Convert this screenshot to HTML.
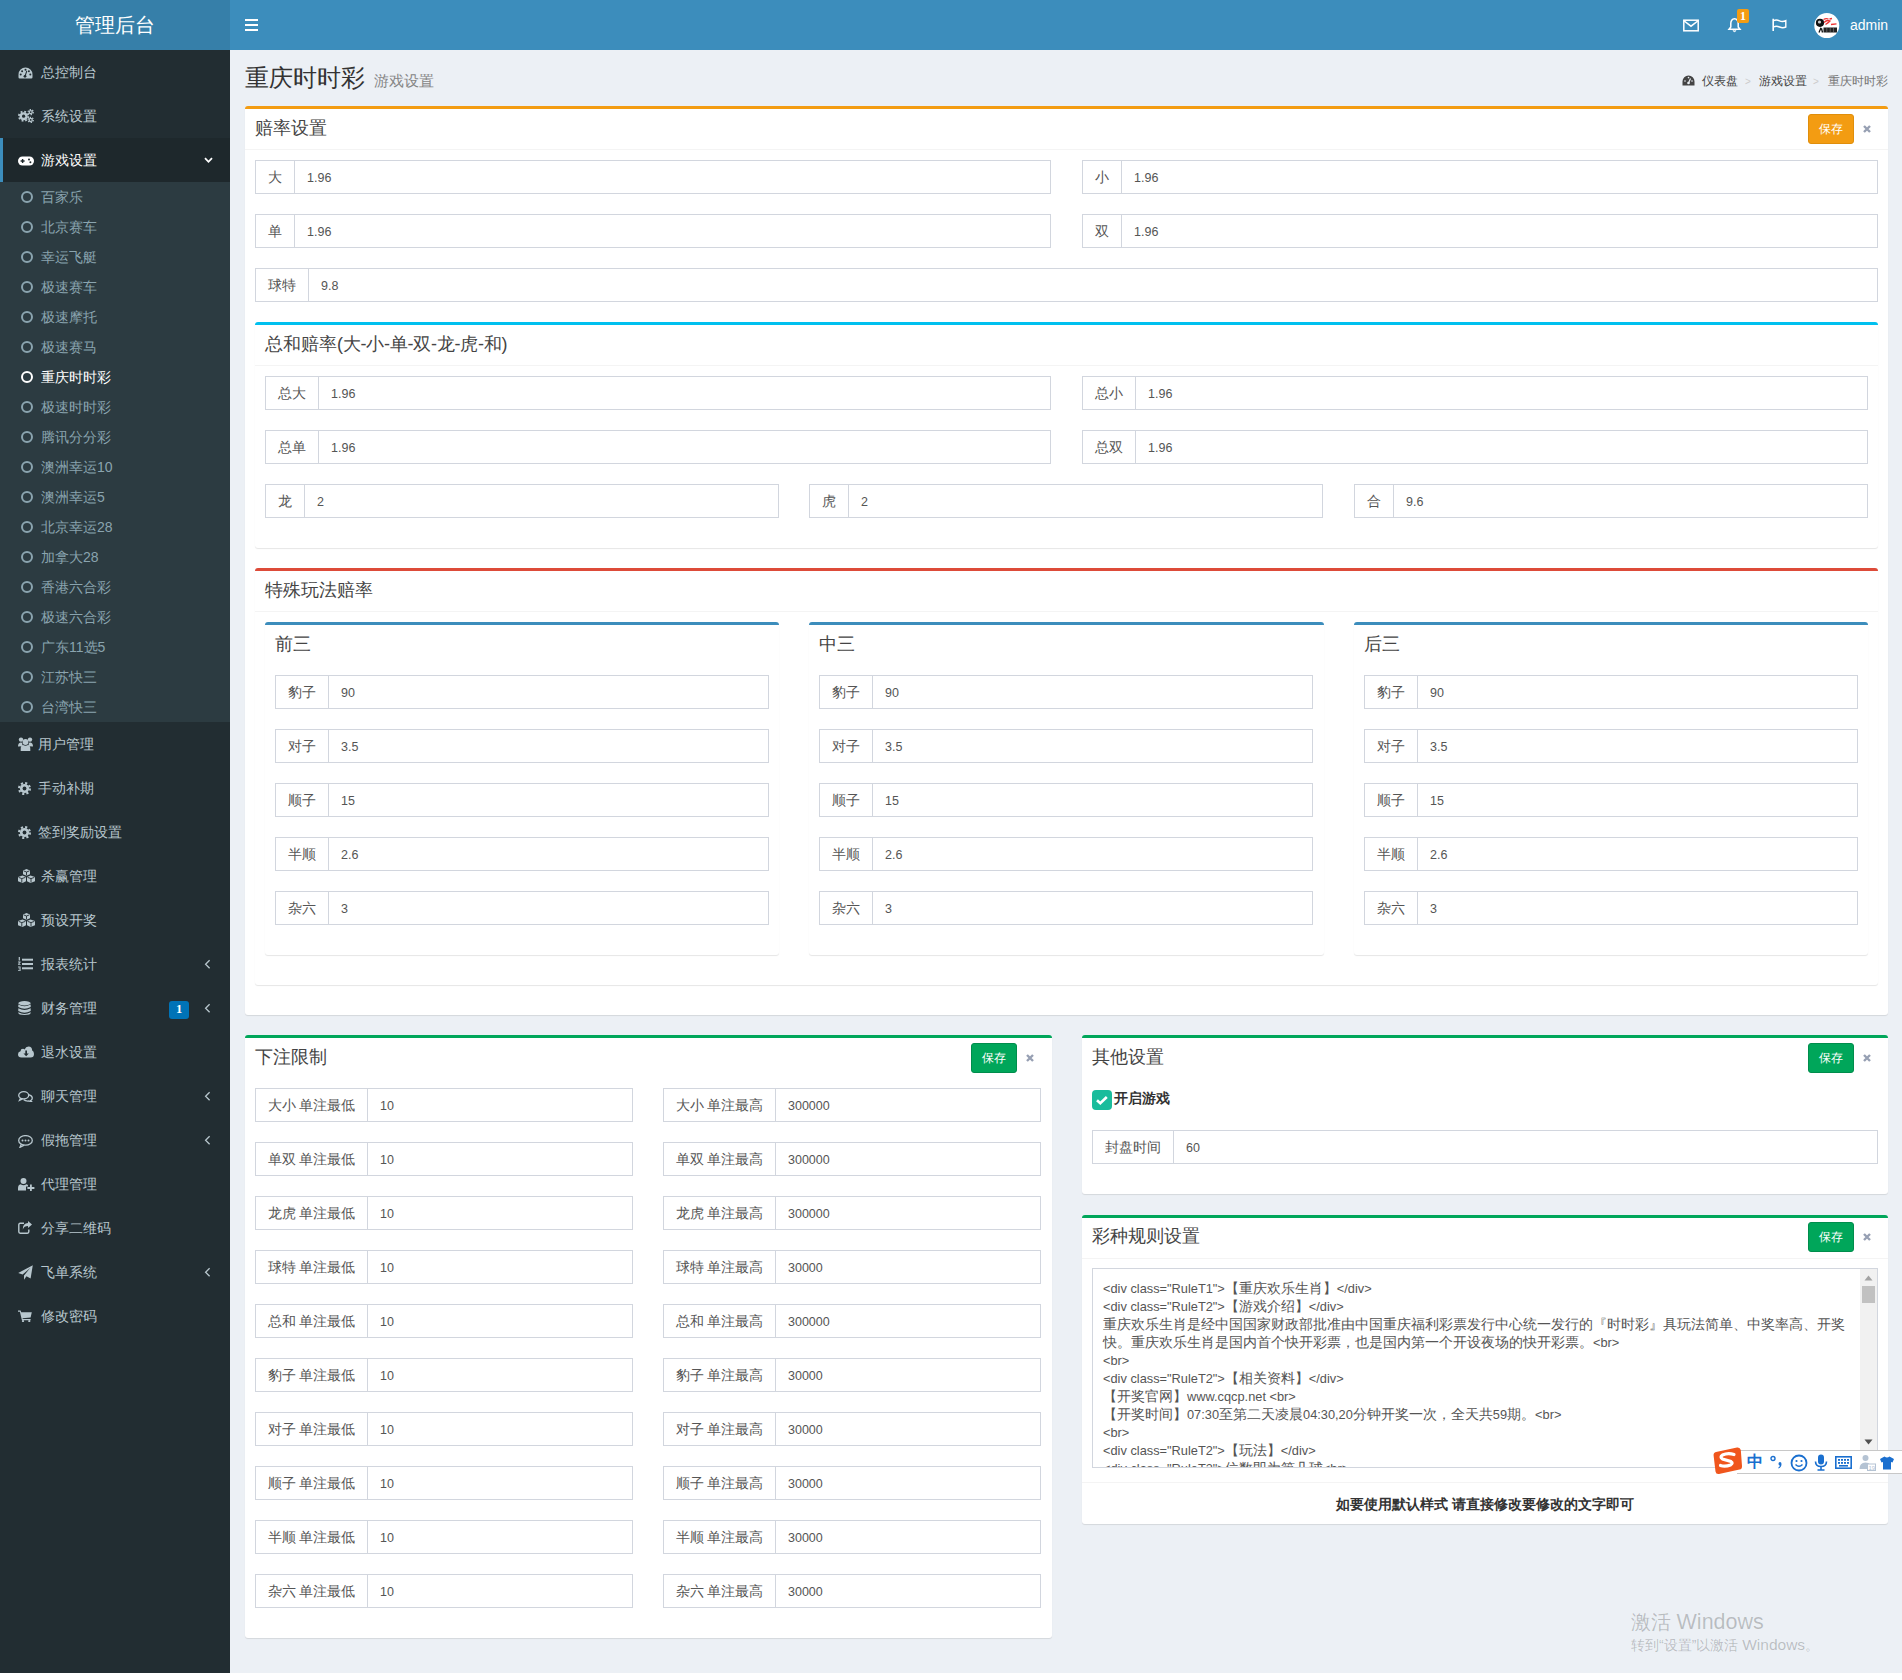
<!DOCTYPE html><html><head><meta charset="utf-8"><title>管理后台</title><style>
*{box-sizing:border-box;margin:0;padding:0}
html,body{width:1902px;height:1680px;overflow:hidden}
body{position:relative;background:#ecf0f5;font-family:"Liberation Sans",sans-serif;font-size:14px;color:#333}
.a{position:absolute}
#logo{left:0;top:0;width:230px;height:50px;background:#367fa9;color:#fff;font-size:20px;line-height:50px;text-align:center}
#nav{left:230px;top:0;width:1672px;height:50px;background:#3c8dbc}
#side{left:0;top:50px;width:230px;height:1630px;background:#222d32}
.mi{position:absolute;left:0;width:230px;height:44px;line-height:44px;color:#b8c7ce;font-size:14px}
.mi .t{position:absolute;left:41px;top:0}
.mi svg{position:absolute}
.mi.act{background:#1e282c;color:#fff;border-left:3px solid #3c8dbc}
.tv{position:absolute;left:0;width:230px;background:#2c3b41}
.si{position:absolute;left:0;width:230px;height:30px;line-height:30px;color:#8aa4af;font-size:14px}
.si .t{position:absolute;left:41px;top:0}
.si .c{position:absolute;left:21px;top:9px;width:12px;height:12px;border:2px solid #8aa4af;border-radius:50%}
.si.act{color:#fff}
.si.act .c{border-color:#fff}
.chev{position:absolute;left:204px;top:17px}
.box{position:absolute;background:#fff;border-top:3px solid #d2d6de;border-radius:3px;box-shadow:0 1px 1px rgba(0,0,0,.1)}
.bt{position:absolute;font-size:18px;color:#444;line-height:18px;white-space:nowrap}
.hb{position:absolute;left:0;right:0;height:1px;background:#f4f4f4}
.ig{position:absolute;height:34px;border:1px solid #d2d6de;background:#fff}
.ig .ad{position:absolute;left:0;top:0;height:32px;line-height:32px;border-right:1px solid #d2d6de;color:#555;font-size:14px;text-align:center}
.ig .v{position:absolute;top:1px;height:32px;line-height:32px;color:#555;font-size:12.5px}
.btn{position:absolute;width:46px;height:30px;line-height:28px;border-radius:3px;color:#fff;font-size:12px;text-align:center}
.bw{background:#f39c12;border:1px solid #e08e0b}
.bs{background:#00a65a;border:1px solid #008d4c}
.x{position:absolute}
</style></head><body>
<div id="logo" class="a">管理后台</div>
<div id="nav" class="a">
<svg class="a" style="left:15px;top:19px" width="13" height="12" viewBox="0 0 13 12"><rect x="0" y="0" width="13" height="2" fill="#fff"/><rect x="0" y="5" width="13" height="2" fill="#fff"/><rect x="0" y="10" width="13" height="2" fill="#fff"/></svg>
<svg class="a" style="left:1453px;top:19px" width="16" height="13" viewBox="0 0 16 13"><rect x="0.8" y="1.2" width="14.4" height="10.6" fill="none" stroke="#fff" stroke-width="1.5"/><path d="M1.2 2 L8 7.2 L14.8 2" fill="none" stroke="#fff" stroke-width="1.5"/></svg>
<svg class="a" style="left:1497px;top:17px" width="15" height="16" viewBox="0 0 15 16"><path d="M7.5 1.8 C5 1.8 3.8 4 3.8 6.5 L3.8 10 L2 12.3 L13 12.3 L11.2 10 L11.2 6.5 C11.2 4 10 1.8 7.5 1.8 Z" fill="none" stroke="#fff" stroke-width="1.5"/><path d="M5.8 13.5 Q7.5 15.8 9.2 13.5" fill="#fff" stroke="#fff" stroke-width="1"/></svg>
<div class="a" style="left:1507px;top:9px;width:12px;height:14px;background:#f39c12;border-radius:2px;color:#fff;font-size:12px;font-weight:bold;line-height:14px;text-align:center;font-family:'Liberation Serif',serif">1</div>
<svg class="a" style="left:1541px;top:18px" width="16" height="14" viewBox="0 0 16 14"><path d="M2.2 0.8 L2.2 13" stroke="#fff" stroke-width="1.6"/><path d="M2.5 2.6 Q5.5 1.4 8.5 2.8 T14.8 2.6 L14.8 9 Q11.8 10.4 8.5 9 T2.5 9" fill="none" stroke="#fff" stroke-width="1.4"/></svg>
<svg class="a" style="left:1584px;top:13px" width="26" height="26" viewBox="0 0 26 26"><circle cx="12.8" cy="12.6" r="12.5" fill="#fff"/><circle cx="6" cy="9.8" r="4.1" fill="#111"/><circle cx="5.5" cy="9" r="1.6" fill="#ccc"/><path d="M9.5 6.5 Q12 5 14.5 6 M10 9.5 Q13 6.5 16 8 Q14 10 11.5 11.5 M15.5 6 L18 5.5 M17 11.5 L22.5 10.8" fill="none" stroke="#e33" stroke-width="1.3"/><path d="M5 19.5 L7 14.8 M7.5 15.5 L8.5 19.5" stroke="#111" stroke-width="1.3"/><rect x="9.5" y="14.5" width="13.5" height="5" fill="#222"/><path d="M12.8 15 V19 M16.2 15 V19 M19.5 15 V19" stroke="#777" stroke-width="0.7"/></svg>
<div class="a" style="left:1620px;top:0;line-height:50px;color:#fff;font-size:14px">admin</div>
</div>
<div id="side" class="a">
<div class="mi" style="top:0px"><svg class="a" style="left:18px;top:17px" width="15" height="12" viewBox="0 0 15 12"><path d="M7.5 0.5 A7 7 0 0 0 0.5 7.5 L0.5 10.3 Q0.5 11.5 1.7 11.5 L13.3 11.5 Q14.5 11.5 14.5 10.3 L14.5 7.5 A7 7 0 0 0 7.5 0.5Z" fill="#b8c7ce"/><g fill="#222d32"><circle cx="2.7" cy="7.6" r="1"/><circle cx="4.1" cy="4.2" r="1"/><circle cx="7.5" cy="2.7" r="1"/><circle cx="10.9" cy="4.2" r="1"/><circle cx="12.3" cy="7.6" r="1"/><circle cx="7" cy="9.3" r="1.4"/></g><path d="M7 9.3 L8.8 3.8" stroke="#222d32" stroke-width="1.1"/></svg><span class="t" style="left:41px">总控制台</span></div>
<div class="mi" style="top:44px"><svg class="a" style="left:18px;top:15px" width="16" height="14" viewBox="0 0 16 14"><g fill="#b8c7ce"><circle cx="5.6" cy="7.2" r="4"/><circle cx="12.7" cy="3.1" r="2.2"/><circle cx="12.7" cy="10.9" r="2.2"/></g><g fill="none" stroke="#b8c7ce"><circle cx="5.6" cy="7.2" r="4.7" stroke-width="1.8" stroke-dasharray="1.85 1.85"/><circle cx="12.7" cy="3.1" r="2.6" stroke-width="1.2" stroke-dasharray="1.36 1.36"/><circle cx="12.7" cy="10.9" r="2.6" stroke-width="1.2" stroke-dasharray="1.36 1.36"/></g><g fill="#222d32"><circle cx="5.6" cy="7.2" r="1.6"/><circle cx="12.7" cy="3.1" r="0.9"/><circle cx="12.7" cy="10.9" r="0.9"/></g></svg><span class="t" style="left:41px">系统设置</span></div>
<div class="mi act" style="top:88px"><svg class="a" style="left:15px;top:18px" width="16" height="10" viewBox="0 0 16 10"><path d="M4.5 0.5 L11.5 0.5 A4.5 4.5 0 0 1 11.5 9.5 L4.5 9.5 A4.5 4.5 0 0 1 4.5 0.5Z" fill="#fff"/><path d="M3.9 3h1.4v1.3h1.3v1.4H5.3V7H3.9V5.7H2.6V4.3h1.3z" fill="#1e282c"/><circle cx="11" cy="3.6" r="1" fill="#1e282c"/><circle cx="12.4" cy="6.2" r="1" fill="#1e282c"/></svg><span class="t" style="left:38px">游戏设置</span><svg class="a" style="left:201px;top:19px" width="9" height="7" viewBox="0 0 9 7"><path d="M1 1.2 L4.5 4.8 L8 1.2" fill="none" stroke="#fff" stroke-width="1.8"/></svg></div>
<div class="tv" style="top:132px;height:540px">
<div class="si" style="top:0px"><span class="c"></span><span class="t">百家乐</span></div>
<div class="si" style="top:30px"><span class="c"></span><span class="t">北京赛车</span></div>
<div class="si" style="top:60px"><span class="c"></span><span class="t">幸运飞艇</span></div>
<div class="si" style="top:90px"><span class="c"></span><span class="t">极速赛车</span></div>
<div class="si" style="top:120px"><span class="c"></span><span class="t">极速摩托</span></div>
<div class="si" style="top:150px"><span class="c"></span><span class="t">极速赛马</span></div>
<div class="si act" style="top:180px"><span class="c"></span><span class="t">重庆时时彩</span></div>
<div class="si" style="top:210px"><span class="c"></span><span class="t">极速时时彩</span></div>
<div class="si" style="top:240px"><span class="c"></span><span class="t">腾讯分分彩</span></div>
<div class="si" style="top:270px"><span class="c"></span><span class="t">澳洲幸运10</span></div>
<div class="si" style="top:300px"><span class="c"></span><span class="t">澳洲幸运5</span></div>
<div class="si" style="top:330px"><span class="c"></span><span class="t">北京幸运28</span></div>
<div class="si" style="top:360px"><span class="c"></span><span class="t">加拿大28</span></div>
<div class="si" style="top:390px"><span class="c"></span><span class="t">香港六合彩</span></div>
<div class="si" style="top:420px"><span class="c"></span><span class="t">极速六合彩</span></div>
<div class="si" style="top:450px"><span class="c"></span><span class="t">广东11选5</span></div>
<div class="si" style="top:480px"><span class="c"></span><span class="t">江苏快三</span></div>
<div class="si" style="top:510px"><span class="c"></span><span class="t">台湾快三</span></div>
</div>
<div class="mi" style="top:672px"><svg class="a" style="left:18px;top:15px" width="15" height="14" viewBox="0 0 15 14"><g fill="#b8c7ce"><circle cx="3" cy="2.6" r="2.2"/><circle cx="12" cy="2.6" r="2.2"/><circle cx="7.5" cy="5" r="2.9"/><path d="M0 9.5 Q0 6 2.5 5.5 L4.2 5.8 Q4 8 5 9.3 L0 9.5Z"/><path d="M15 9.5 Q15 6 12.5 5.5 L10.8 5.8 Q11 8 10 9.3 L15 9.5Z"/><path d="M2.7 14 L2.7 11.8 Q2.7 8.4 5 8 Q7.5 9.3 10 8 Q12.3 8.4 12.3 11.8 L12.3 14Z"/></g></svg><span class="t" style="left:38px">用户管理</span>
</div>
<div class="mi" style="top:716px"><svg class="a" style="left:18px;top:16px" width="13" height="13" viewBox="0 0 13 13"><circle cx="6.5" cy="6.5" r="4.6" fill="#b8c7ce"/><circle cx="6.5" cy="6.5" r="5.4" fill="none" stroke="#b8c7ce" stroke-width="2.2" stroke-dasharray="2.12 2.12"/><circle cx="6.5" cy="6.5" r="1.9" fill="#222d32"/></svg><span class="t" style="left:38px">手动补期</span>
</div>
<div class="mi" style="top:760px"><svg class="a" style="left:18px;top:16px" width="13" height="13" viewBox="0 0 13 13"><circle cx="6.5" cy="6.5" r="4.6" fill="#b8c7ce"/><circle cx="6.5" cy="6.5" r="5.4" fill="none" stroke="#b8c7ce" stroke-width="2.2" stroke-dasharray="2.12 2.12"/><circle cx="6.5" cy="6.5" r="1.9" fill="#222d32"/></svg><span class="t" style="left:38px">签到奖励设置</span>
</div>
<div class="mi" style="top:804px"><svg class="a" style="left:18px;top:15px" width="17" height="14" viewBox="0 0 17 14"><g fill="#b8c7ce"><path d="M8.5 0 L12 1.5 L12 5.3 L8.5 6.8 L5 5.3 L5 1.5Z"/><path d="M4.5 6.5 L8 8 L8 12.2 L4.5 14 L0 12.2 L0 8Z"/><path d="M12.5 6.5 L17 8 L17 12.2 L12.5 14 L9 12.2 L9 8Z"/></g><g fill="none" stroke="#222d32" stroke-width="0.9"><path d="M5.6 1.9 L8.5 3 L11.4 1.9 M8.5 3 L8.5 6.3"/><path d="M0.6 8.4 L3.8 9.6 L7.4 8.4 M3.8 9.6 L3.8 13.6"/><path d="M9.6 8.4 L13 9.6 L16.4 8.4 M13 9.6 L13 13.6"/></g></svg><span class="t" style="left:41px">杀赢管理</span>
</div>
<div class="mi" style="top:848px"><svg class="a" style="left:18px;top:15px" width="17" height="14" viewBox="0 0 17 14"><g fill="#b8c7ce"><path d="M8.5 0 L12 1.5 L12 5.3 L8.5 6.8 L5 5.3 L5 1.5Z"/><path d="M4.5 6.5 L8 8 L8 12.2 L4.5 14 L0 12.2 L0 8Z"/><path d="M12.5 6.5 L17 8 L17 12.2 L12.5 14 L9 12.2 L9 8Z"/></g><g fill="none" stroke="#222d32" stroke-width="0.9"><path d="M5.6 1.9 L8.5 3 L11.4 1.9 M8.5 3 L8.5 6.3"/><path d="M0.6 8.4 L3.8 9.6 L7.4 8.4 M3.8 9.6 L3.8 13.6"/><path d="M9.6 8.4 L13 9.6 L16.4 8.4 M13 9.6 L13 13.6"/></g></svg><span class="t" style="left:41px">预设开奖</span>
</div>
<div class="mi" style="top:892px"><svg class="a" style="left:18px;top:15px" width="15" height="14" viewBox="0 0 15 14"><g fill="#b8c7ce"><rect x="4" y="1.7" width="11" height="2"/><rect x="4" y="6" width="11" height="2"/><rect x="4" y="10.3" width="11" height="2"/><path d="M0.7 0 H1.9 V3.6 H0.7Z M0 4.6 H2.6 V5.4 L1.2 7 H2.6 V7.8 H0 V7.1 L1.5 5.4 H0Z M0 9.6 H2.6 V14 H0 V13.2 H1.7 V12.2 H0.6 V11.4 H1.7 V10.4 H0Z"/></g></svg><span class="t" style="left:41px">报表统计</span>
<svg class="chev" width="7" height="10" viewBox="0 0 7 10"><path d="M5.6 1.3 L1.6 5.3 L5.6 9.3" fill="none" stroke="#b8c7ce" stroke-width="1.3"/></svg>
</div>
<div class="mi" style="top:936px"><svg class="a" style="left:18px;top:15px" width="13" height="14" viewBox="0 0 13 14"><g fill="#b8c7ce"><ellipse cx="6.5" cy="2.2" rx="6.2" ry="2.2"/><path d="M0.3 3.4 Q6.5 7 12.7 3.4 L12.7 6 Q6.5 9.6 0.3 6Z"/><path d="M0.3 7.3 Q6.5 10.9 12.7 7.3 L12.7 9.9 Q6.5 13.5 0.3 9.9Z"/><path d="M0.3 11.2 Q6.5 14.8 12.7 11.2 L12.7 11.8 Q12.7 14 6.5 14 Q0.3 14 0.3 11.8Z"/></g></svg><span class="t" style="left:41px">财务管理</span>
<svg class="chev" width="7" height="10" viewBox="0 0 7 10"><path d="M5.6 1.3 L1.6 5.3 L5.6 9.3" fill="none" stroke="#b8c7ce" stroke-width="1.3"/></svg>
<div class="a" style="left:169px;top:15px;width:20px;height:18px;background:#0073b7;border-radius:3px;color:#fff;font-size:12.5px;font-weight:bold;line-height:16px;text-align:center;font-family:'Liberation Serif',serif">1</div>
</div>
<div class="mi" style="top:980px"><svg class="a" style="left:18px;top:16px" width="16" height="12" viewBox="0 0 16 12"><path d="M3.5 11.5 Q0 11.5 0 8.3 Q0 5.8 2.5 5.2 Q2.6 2.8 5 2.8 Q6 2.8 6.6 3.4 Q7.8 0.5 10.5 0.5 Q14 0.5 14.2 4.6 Q16 5.6 16 8 Q16 11.5 12.5 11.5Z" fill="#b8c7ce"/><path d="M7.3 4.5h1.7v3h1.8L8.15 10.2 5.5 7.5h1.8z" fill="#222d32"/></svg><span class="t" style="left:41px">退水设置</span>
</div>
<div class="mi" style="top:1024px"><svg class="a" style="left:18px;top:17px" width="15" height="11" viewBox="0 0 15 11"><g fill="none" stroke="#b8c7ce" stroke-width="1.3"><ellipse cx="5.7" cy="4.3" rx="5" ry="3.6"/><path d="M2.6 7 L1.5 9.3 L4.6 7.8"/><path d="M10.6 3.6 Q14.3 4.6 14.3 7 Q14.3 8.6 12.8 9.5 L13.6 10.6 L10.8 10 Q7.3 10.3 5.6 8.5"/></g></svg><span class="t" style="left:41px">聊天管理</span>
<svg class="chev" width="7" height="10" viewBox="0 0 7 10"><path d="M5.6 1.3 L1.6 5.3 L5.6 9.3" fill="none" stroke="#b8c7ce" stroke-width="1.3"/></svg>
</div>
<div class="mi" style="top:1068px"><svg class="a" style="left:18px;top:17px" width="15" height="13" viewBox="0 0 15 13"><g fill="none" stroke="#b8c7ce" stroke-width="1.3"><ellipse cx="7.5" cy="5.4" rx="6.8" ry="4.8"/><path d="M3.4 9 L2 12.3 L6.2 10.1"/></g><g fill="#b8c7ce"><circle cx="4.5" cy="5.4" r="1"/><circle cx="7.5" cy="5.4" r="1"/><circle cx="10.5" cy="5.4" r="1"/></g></svg><span class="t" style="left:41px">假拖管理</span>
<svg class="chev" width="7" height="10" viewBox="0 0 7 10"><path d="M5.6 1.3 L1.6 5.3 L5.6 9.3" fill="none" stroke="#b8c7ce" stroke-width="1.3"/></svg>
</div>
<div class="mi" style="top:1112px"><svg class="a" style="left:18px;top:16px" width="17" height="13" viewBox="0 0 17 13"><g fill="#b8c7ce"><circle cx="5.5" cy="3" r="3"/><path d="M0 12.5 L0 10.5 Q0 6.8 2.6 6.3 Q5.5 8 8.4 6.3 Q9.4 6.5 10 7.2 L10 8.5 L8 8.5 L8 12.5Z"/><path d="M12 6.5h1.8v2.6h2.6v1.8h-2.6v2.6H12v-2.6H9.4V9.1H12z"/></g></svg><span class="t" style="left:41px">代理管理</span>
</div>
<div class="mi" style="top:1156px"><svg class="a" style="left:18px;top:15px" width="14" height="13" viewBox="0 0 14 13"><g fill="none" stroke="#b8c7ce" stroke-width="1.4"><path d="M6 2.3 H2.2 Q0.8 2.3 0.8 3.7 L0.8 10.8 Q0.8 12.2 2.2 12.2 L9.4 12.2 Q10.8 12.2 10.8 10.8 L10.8 8.5"/></g><path d="M10 0 L14 3.5 L10 7 L10 5 Q6 5 4.8 8.4 Q4.8 2.2 10 2.1Z" fill="#b8c7ce"/></svg><span class="t" style="left:41px">分享二维码</span>
</div>
<div class="mi" style="top:1200px"><svg class="a" style="left:18px;top:15px" width="15" height="15" viewBox="0 0 15 15"><path d="M14.8 0.2 L0.2 8 L4.6 9.6 L12.4 2.8 L6 10.4 L6 14.8 L8.5 11.3 L12.6 13.4Z" fill="#b8c7ce"/></svg><span class="t" style="left:41px">飞单系统</span>
<svg class="chev" width="7" height="10" viewBox="0 0 7 10"><path d="M5.6 1.3 L1.6 5.3 L5.6 9.3" fill="none" stroke="#b8c7ce" stroke-width="1.3"/></svg>
</div>
<div class="mi" style="top:1244px"><svg class="a" style="left:18px;top:16px" width="14" height="12" viewBox="0 0 14 12"><g fill="#b8c7ce"><path d="M0 0.6 H2.6 L3.2 2.3 H13.8 L12.6 7.6 L4.5 8.3 L4.8 9.1 H12.6 V10.2 H3.9 L1.9 1.7 H0Z"/><circle cx="5" cy="11" r="1.1"/><circle cx="11.3" cy="11" r="1.1"/></g></svg><span class="t" style="left:41px">修改密码</span>
</div>
</div>
<div class="a" style="left:245px;top:65px;font-size:24px;line-height:26px;color:#333;white-space:nowrap">重庆时时彩 <span style="font-size:15px;color:#858585;padding-left:2px">游戏设置</span></div>
<div class="a" style="left:1682px;top:74px;font-size:12px;line-height:14px;color:#444;white-space:nowrap">
<svg class="a" style="left:0;top:1px" width="13" height="11" viewBox="0 0 13 11"><path d="M6.5 0.5 A6 6 0 0 0 0.5 6.5 L0.5 10.5 L12.5 10.5 L12.5 6.5 A6 6 0 0 0 6.5 0.5 Z" fill="#444"/><circle cx="6.5" cy="8" r="1.3" fill="#ecf0f5"/><path d="M6.5 8 L8.5 3.5" stroke="#ecf0f5" stroke-width="1.2"/><circle cx="3" cy="6" r=".8" fill="#ecf0f5"/><circle cx="10" cy="6" r=".8" fill="#ecf0f5"/><circle cx="6.5" cy="2.6" r=".8" fill="#ecf0f5"/></svg>
<span class="a" style="left:20px;top:0">仪表盘</span><span class="a" style="left:63px;top:1px;font-size:10px;color:#ccc">&gt;</span><span class="a" style="left:77px;top:0">游戏设置</span><span class="a" style="left:131px;top:1px;font-size:10px;color:#ccc">&gt;</span><span class="a" style="left:146px;top:0;color:#777">重庆时时彩</span>
</div>
<div class="box" style="left:245px;top:106px;width:1643px;height:909px;border-top-color:#f39c12;"></div>
<div class="bt" style="left:255px;top:119px">赔率设置</div>
<div class="a" style="left:245px;top:149px;width:1643px;height:1px;background:#f4f4f4"></div>
<div class="btn bw" style="left:1808px;top:114px">保存</div>
<svg class="x" style="left:1863px;top:125px" width="8" height="8" viewBox="0 0 8 8"><path d="M1 1 L7 7 M7 1 L1 7" stroke="#97a0b3" stroke-width="2.4"/></svg>
<div class="ig" style="left:255px;top:160px;width:796px"><div class="ad" style="width:39px">大</div><div class="v" style="left:51px">1.96</div></div>
<div class="ig" style="left:1082px;top:160px;width:796px"><div class="ad" style="width:39px">小</div><div class="v" style="left:51px">1.96</div></div>
<div class="ig" style="left:255px;top:214px;width:796px"><div class="ad" style="width:39px">单</div><div class="v" style="left:51px">1.96</div></div>
<div class="ig" style="left:1082px;top:214px;width:796px"><div class="ad" style="width:39px">双</div><div class="v" style="left:51px">1.96</div></div>
<div class="ig" style="left:255px;top:268px;width:1623px"><div class="ad" style="width:53px">球特</div><div class="v" style="left:65px">9.8</div></div>
<div class="box" style="left:255px;top:322px;width:1623px;height:226px;border-top-color:#00c0ef;"></div>
<div class="bt" style="left:265px;top:335px">总和赔率<span style="letter-spacing:-0.5px">(</span>大<span style="letter-spacing:-0.5px">-</span>小<span style="letter-spacing:-0.5px">-</span>单<span style="letter-spacing:-0.5px">-</span>双<span style="letter-spacing:-0.5px">-</span>龙<span style="letter-spacing:-0.5px">-</span>虎<span style="letter-spacing:-0.5px">-</span>和)</div>
<div class="a" style="left:255px;top:365px;width:1623px;height:1px;background:#f4f4f4"></div>
<div class="ig" style="left:265px;top:376px;width:786px"><div class="ad" style="width:53px">总大</div><div class="v" style="left:65px">1.96</div></div>
<div class="ig" style="left:1082px;top:376px;width:786px"><div class="ad" style="width:53px">总小</div><div class="v" style="left:65px">1.96</div></div>
<div class="ig" style="left:265px;top:430px;width:786px"><div class="ad" style="width:53px">总单</div><div class="v" style="left:65px">1.96</div></div>
<div class="ig" style="left:1082px;top:430px;width:786px"><div class="ad" style="width:53px">总双</div><div class="v" style="left:65px">1.96</div></div>
<div class="ig" style="left:265px;top:484px;width:514px"><div class="ad" style="width:39px">龙</div><div class="v" style="left:51px">2</div></div>
<div class="ig" style="left:809px;top:484px;width:514px"><div class="ad" style="width:39px">虎</div><div class="v" style="left:51px">2</div></div>
<div class="ig" style="left:1354px;top:484px;width:514px"><div class="ad" style="width:39px">合</div><div class="v" style="left:51px">9.6</div></div>
<div class="box" style="left:255px;top:568px;width:1623px;height:417px;border-top-color:#dd4b39;"></div>
<div class="bt" style="left:265px;top:581px">特殊玩法赔率</div>
<div class="a" style="left:255px;top:611px;width:1623px;height:1px;background:#f4f4f4"></div>
<div class="box" style="left:265px;top:622px;width:514px;height:333px;border-top-color:#3c8dbc;"></div>
<div class="bt" style="left:275px;top:635px">前三</div>
<div class="ig" style="left:275px;top:675px;width:494px"><div class="ad" style="width:53px">豹子</div><div class="v" style="left:65px">90</div></div>
<div class="ig" style="left:275px;top:729px;width:494px"><div class="ad" style="width:53px">对子</div><div class="v" style="left:65px">3.5</div></div>
<div class="ig" style="left:275px;top:783px;width:494px"><div class="ad" style="width:53px">顺子</div><div class="v" style="left:65px">15</div></div>
<div class="ig" style="left:275px;top:837px;width:494px"><div class="ad" style="width:53px">半顺</div><div class="v" style="left:65px">2.6</div></div>
<div class="ig" style="left:275px;top:891px;width:494px"><div class="ad" style="width:53px">杂六</div><div class="v" style="left:65px">3</div></div>
<div class="box" style="left:809px;top:622px;width:515px;height:333px;border-top-color:#3c8dbc;"></div>
<div class="bt" style="left:819px;top:635px">中三</div>
<div class="ig" style="left:819px;top:675px;width:494px"><div class="ad" style="width:53px">豹子</div><div class="v" style="left:65px">90</div></div>
<div class="ig" style="left:819px;top:729px;width:494px"><div class="ad" style="width:53px">对子</div><div class="v" style="left:65px">3.5</div></div>
<div class="ig" style="left:819px;top:783px;width:494px"><div class="ad" style="width:53px">顺子</div><div class="v" style="left:65px">15</div></div>
<div class="ig" style="left:819px;top:837px;width:494px"><div class="ad" style="width:53px">半顺</div><div class="v" style="left:65px">2.6</div></div>
<div class="ig" style="left:819px;top:891px;width:494px"><div class="ad" style="width:53px">杂六</div><div class="v" style="left:65px">3</div></div>
<div class="box" style="left:1354px;top:622px;width:514px;height:333px;border-top-color:#3c8dbc;"></div>
<div class="bt" style="left:1364px;top:635px">后三</div>
<div class="ig" style="left:1364px;top:675px;width:494px"><div class="ad" style="width:53px">豹子</div><div class="v" style="left:65px">90</div></div>
<div class="ig" style="left:1364px;top:729px;width:494px"><div class="ad" style="width:53px">对子</div><div class="v" style="left:65px">3.5</div></div>
<div class="ig" style="left:1364px;top:783px;width:494px"><div class="ad" style="width:53px">顺子</div><div class="v" style="left:65px">15</div></div>
<div class="ig" style="left:1364px;top:837px;width:494px"><div class="ad" style="width:53px">半顺</div><div class="v" style="left:65px">2.6</div></div>
<div class="ig" style="left:1364px;top:891px;width:494px"><div class="ad" style="width:53px">杂六</div><div class="v" style="left:65px">3</div></div>
<div class="box" style="left:245px;top:1035px;width:807px;height:603px;border-top-color:#00a65a;"></div>
<div class="bt" style="left:255px;top:1048px">下注限制</div>
<div class="btn bs" style="left:971px;top:1043px">保存</div>
<svg class="x" style="left:1026px;top:1054px" width="8" height="8" viewBox="0 0 8 8"><path d="M1 1 L7 7 M7 1 L1 7" stroke="#97a0b3" stroke-width="2.4"/></svg>
<div class="ig" style="left:255px;top:1088px;width:378px"><div class="ad" style="width:112px">大小 单注最低</div><div class="v" style="left:124px">10</div></div>
<div class="ig" style="left:663px;top:1088px;width:378px"><div class="ad" style="width:112px">大小 单注最高</div><div class="v" style="left:124px">300000</div></div>
<div class="ig" style="left:255px;top:1142px;width:378px"><div class="ad" style="width:112px">单双 单注最低</div><div class="v" style="left:124px">10</div></div>
<div class="ig" style="left:663px;top:1142px;width:378px"><div class="ad" style="width:112px">单双 单注最高</div><div class="v" style="left:124px">300000</div></div>
<div class="ig" style="left:255px;top:1196px;width:378px"><div class="ad" style="width:112px">龙虎 单注最低</div><div class="v" style="left:124px">10</div></div>
<div class="ig" style="left:663px;top:1196px;width:378px"><div class="ad" style="width:112px">龙虎 单注最高</div><div class="v" style="left:124px">300000</div></div>
<div class="ig" style="left:255px;top:1250px;width:378px"><div class="ad" style="width:112px">球特 单注最低</div><div class="v" style="left:124px">10</div></div>
<div class="ig" style="left:663px;top:1250px;width:378px"><div class="ad" style="width:112px">球特 单注最高</div><div class="v" style="left:124px">30000</div></div>
<div class="ig" style="left:255px;top:1304px;width:378px"><div class="ad" style="width:112px">总和 单注最低</div><div class="v" style="left:124px">10</div></div>
<div class="ig" style="left:663px;top:1304px;width:378px"><div class="ad" style="width:112px">总和 单注最高</div><div class="v" style="left:124px">300000</div></div>
<div class="ig" style="left:255px;top:1358px;width:378px"><div class="ad" style="width:112px">豹子 单注最低</div><div class="v" style="left:124px">10</div></div>
<div class="ig" style="left:663px;top:1358px;width:378px"><div class="ad" style="width:112px">豹子 单注最高</div><div class="v" style="left:124px">30000</div></div>
<div class="ig" style="left:255px;top:1412px;width:378px"><div class="ad" style="width:112px">对子 单注最低</div><div class="v" style="left:124px">10</div></div>
<div class="ig" style="left:663px;top:1412px;width:378px"><div class="ad" style="width:112px">对子 单注最高</div><div class="v" style="left:124px">30000</div></div>
<div class="ig" style="left:255px;top:1466px;width:378px"><div class="ad" style="width:112px">顺子 单注最低</div><div class="v" style="left:124px">10</div></div>
<div class="ig" style="left:663px;top:1466px;width:378px"><div class="ad" style="width:112px">顺子 单注最高</div><div class="v" style="left:124px">30000</div></div>
<div class="ig" style="left:255px;top:1520px;width:378px"><div class="ad" style="width:112px">半顺 单注最低</div><div class="v" style="left:124px">10</div></div>
<div class="ig" style="left:663px;top:1520px;width:378px"><div class="ad" style="width:112px">半顺 单注最高</div><div class="v" style="left:124px">30000</div></div>
<div class="ig" style="left:255px;top:1574px;width:378px"><div class="ad" style="width:112px">杂六 单注最低</div><div class="v" style="left:124px">10</div></div>
<div class="ig" style="left:663px;top:1574px;width:378px"><div class="ad" style="width:112px">杂六 单注最高</div><div class="v" style="left:124px">30000</div></div>
<div class="box" style="left:1082px;top:1035px;width:806px;height:159px;border-top-color:#00a65a;"></div>
<div class="bt" style="left:1092px;top:1048px">其他设置</div>
<div class="btn bs" style="left:1808px;top:1043px">保存</div>
<svg class="x" style="left:1863px;top:1054px" width="8" height="8" viewBox="0 0 8 8"><path d="M1 1 L7 7 M7 1 L1 7" stroke="#97a0b3" stroke-width="2.4"/></svg>
<div class="a" style="left:1092px;top:1090px;width:20px;height:20px;border-radius:4px;background:#1abc9c"><svg class="a" style="left:3px;top:4px" width="14" height="12" viewBox="0 0 14 12"><path d="M2 6.2 L5.3 9.3 L11.8 3" fill="none" stroke="#fff" stroke-width="2.6"/></svg></div>
<div class="a" style="left:1114px;top:1090px;font-size:14px;font-weight:bold;line-height:16px;color:#333">开启游戏</div>
<div class="ig" style="left:1092px;top:1130px;width:786px"><div class="ad" style="width:81px">封盘时间</div><div class="v" style="left:93px">60</div></div>
<div class="box" style="left:1082px;top:1215px;width:806px;height:309px;border-top-color:#00a65a;"></div>
<div class="bt" style="left:1092px;top:1227px">彩种规则设置</div>
<div class="a" style="left:1082px;top:1258px;width:806px;height:1px;background:#f4f4f4"></div>
<div class="btn bs" style="left:1808px;top:1222px">保存</div>
<svg class="x" style="left:1863px;top:1233px" width="8" height="8" viewBox="0 0 8 8"><path d="M1 1 L7 7 M7 1 L1 7" stroke="#97a0b3" stroke-width="2.4"/></svg>
<div class="a" style="left:1092px;top:1268px;width:786px;height:200px;border:1px solid #d2d6de;overflow:hidden;background:#fff">
<div class="a" style="left:10px;top:10px;width:750px;font-size:14px;line-height:18px;color:#555;white-space:nowrap"><div style="height:18px"><span style="font-size:12.8px">&lt;div class="RuleT1"&gt;</span>【重庆欢乐生肖】<span style="font-size:12.8px">&lt;/div&gt;</span></div><div style="height:18px"><span style="font-size:12.8px">&lt;div class="RuleT2"&gt;</span>【游戏介绍】<span style="font-size:12.8px">&lt;/div&gt;</span></div><div style="height:18px">重庆欢乐生肖是经中国国家财政部批准由中国重庆福利彩票发行中心统一发行的『时时彩』具玩法简单、中奖率高、开奖</div><div style="height:18px">快。重庆欢乐生肖是国内首个快开彩票，也是国内第一个开设夜场的快开彩票。<span style="font-size:12.8px">&lt;br&gt;</span></div><div style="height:18px"><span style="font-size:12.8px">&lt;br&gt;</span></div><div style="height:18px"><span style="font-size:12.8px">&lt;div class="RuleT2"&gt;</span>【相关资料】<span style="font-size:12.8px">&lt;/div&gt;</span></div><div style="height:18px">【开奖官网】<span style="font-size:12.8px">www.cqcp.net &lt;br&gt;</span></div><div style="height:18px">【开奖时间】<span style="font-size:12.8px">07:30</span>至第二天凌晨<span style="font-size:12.8px">04:30,20</span>分钟开奖一次，全天共<span style="font-size:12.8px">59</span>期。<span style="font-size:12.8px">&lt;br&gt;</span></div><div style="height:18px"><span style="font-size:12.8px">&lt;br&gt;</span></div><div style="height:18px"><span style="font-size:12.8px">&lt;div class="RuleT2"&gt;</span>【玩法】<span style="font-size:12.8px">&lt;/div&gt;</span></div><div style="height:18px"><span style="font-size:12.8px">&lt;div class="RuleT3"&gt;</span>位数即为第几球<span style="font-size:12.8px">&lt;br&gt;</span></div></div>
<div class="a" style="right:0;top:0;width:17px;height:181px;background:#f1f1f1"><svg class="a" style="left:4px;top:6px" width="9" height="6" viewBox="0 0 9 6"><path d="M0.5 5.5 L4.5 0.5 L8.5 5.5Z" fill="#a3a3a3"/></svg><div class="a" style="left:2px;top:17px;width:13px;height:17px;background:#c1c1c1"></div><svg class="a" style="left:4px;top:170px" width="9" height="6" viewBox="0 0 9 6"><path d="M0.5 0.5 L4.5 5.5 L8.5 0.5Z" fill="#505050"/></svg></div>
</div>
<div class="a" style="left:1082px;top:1482px;width:806px;height:1px;background:#f4f4f4"></div>
<div class="a" style="left:1082px;top:1494px;width:806px;text-align:center;font-size:14px;font-weight:bold;line-height:20px;color:#333">如要使用默认样式 请直接修改要修改的文字即可</div>
<div class="a" style="left:1631px;top:1610px;font-size:20px;line-height:24px;color:rgba(0,0,0,.22);white-space:nowrap">激活 <span style="font-size:21.5px">Windows</span></div>
<div class="a" style="left:1631px;top:1636px;font-size:14px;line-height:18px;color:rgba(0,0,0,.22);white-space:nowrap">转到“设置”以激活 <span style="font-size:15.5px">Windows</span>。</div>
<div class="a" style="left:0;top:1673px;width:1902px;height:7px;background:#fff"></div>
<div class="a" style="left:1737px;top:1450px;width:165px;height:24px;background:#fff;border-top:1px solid #c8c8c8;border-bottom:1px solid #c8c8c8"></div>
<svg class="a" style="left:1713px;top:1446px" width="30" height="29" viewBox="0 0 30 29"><path d="M3 6 L24 1.5 Q27 1 27.8 4 L29 20 Q29.3 23 26.5 23.6 L6 28 Q3 28.5 2.5 25.5 L0.6 9.5 Q0.3 6.5 3 6Z" fill="#f0561d"/><path d="M21 8.5 Q15 6.5 9.5 9 Q6.5 11 9.5 13 L18 15.5 Q20.5 17 17.5 19 Q12 21 7.5 19.5" fill="none" stroke="#fff" stroke-width="3.2" stroke-linecap="round"/></svg>
<div class="a" style="left:1747px;top:1453px;font-size:16px;line-height:18px;font-weight:bold;color:#1a6fcf">中</div>
<svg class="a" style="left:1770px;top:1455px" width="13" height="14" viewBox="0 0 13 14"><circle cx="3" cy="3.5" r="2" fill="none" stroke="#1a6fcf" stroke-width="1.4"/><path d="M10 7 Q11.5 7 11.5 9 Q11.5 12 8.5 13.5 L8.2 12.8 Q9.8 11.8 9.8 10.6 Q8.5 10.5 8.5 8.8 Q8.5 7 10 7Z" fill="#1a6fcf"/></svg>
<svg class="a" style="left:1790px;top:1454px" width="18" height="18" viewBox="0 0 18 18"><circle cx="9" cy="9" r="7.5" fill="none" stroke="#1a6fcf" stroke-width="1.8"/><circle cx="6.5" cy="7" r="1.1" fill="#1a6fcf"/><circle cx="11.5" cy="7" r="1.1" fill="#1a6fcf"/><path d="M5.5 10.5 Q9 14 12.5 10.5" fill="none" stroke="#1a6fcf" stroke-width="1.5"/></svg>
<svg class="a" style="left:1814px;top:1454px" width="14" height="17" viewBox="0 0 14 17"><rect x="4" y="0.5" width="6" height="10" rx="3" fill="#1a6fcf"/><path d="M1.5 7.5 Q1.5 12.5 7 12.5 Q12.5 12.5 12.5 7.5" fill="none" stroke="#1a6fcf" stroke-width="1.6"/><path d="M7 12.5 V15.5 M3.5 16 H10.5" stroke="#1a6fcf" stroke-width="1.6"/></svg>
<svg class="a" style="left:1835px;top:1456px" width="17" height="13" viewBox="0 0 17 13"><rect x="0.8" y="0.8" width="15.4" height="11.4" fill="none" stroke="#1a6fcf" stroke-width="1.6"/><g fill="#1a6fcf"><rect x="3" y="3" width="2" height="1.8"/><rect x="6" y="3" width="2" height="1.8"/><rect x="9" y="3" width="2" height="1.8"/><rect x="12" y="3" width="2" height="1.8"/><rect x="3" y="6" width="2" height="1.8"/><rect x="6" y="6" width="2" height="1.8"/><rect x="9" y="6" width="2" height="1.8"/><rect x="12" y="6" width="2" height="1.8"/><rect x="4" y="9" width="9" height="1.6"/></g></svg>
<svg class="a" style="left:1859px;top:1454px" width="17" height="17" viewBox="0 0 17 17"><circle cx="6.5" cy="4" r="3" fill="#b5c3d3"/><path d="M0.5 15 Q0.5 8.5 6.5 8.5 Q10 8.5 11 10.5 L11 15Z" fill="#b5c3d3"/><rect x="8.5" y="10" width="8" height="6.5" fill="#fff" stroke="#b5c3d3" stroke-width="1"/><text x="9.5" y="15.8" font-size="6" fill="#b5c3d3" font-family="Liberation Sans">19</text></svg>
<svg class="a" style="left:1880px;top:1456px" width="14" height="14" viewBox="0 0 14 14"><path d="M4.5 0.5 Q7 2.5 9.5 0.5 L14 3 L12.5 6.5 L11 6 L11 13.5 L3 13.5 L3 6 L1.5 6.5 L0 3Z" fill="#1a6fcf"/></svg>
</body></html>
